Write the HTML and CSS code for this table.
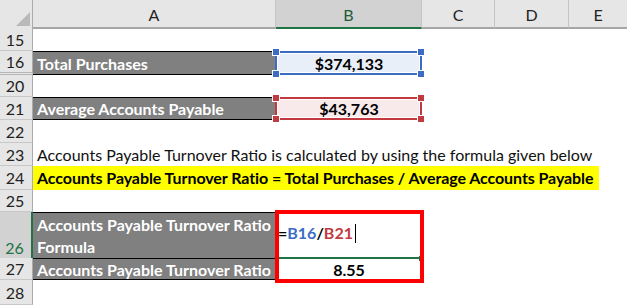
FILE: index.html
```html
<!DOCTYPE html>
<html>
<head>
<meta charset="utf-8">
<link rel="stylesheet" href="styles.css">
</head>
<body>
<div class="sheet">
  <div class="row hdr">
    <div class="corner"><svg width="33" height="28" viewBox="0 0 33 28"><polygon points="30,12 30,26 16,26" fill="#b9b9b9"/></svg></div>
    <div class="ch">A</div>
    <div class="ch sel">B</div>
    <div class="ch">C</div>
    <div class="ch">D</div>
    <div class="ch last">E</div>
  </div>

  <div class="row h23"><div class="rh">15</div></div>

  <div class="row h24">
    <div class="rh dbl">16</div>
    <div class="lab">Total Purchases</div>
    <div class="ref blue"><span class="val">$374,133</span><div class="box"><i class="hd tl"></i><i class="hd tr"></i><i class="hd bl"></i><i class="hd br"></i></div></div>
  </div>

  <div class="row h22"><div class="rh">20</div></div>

  <div class="row h23">
    <div class="rh">21</div>
    <div class="lab">Average Accounts Payable</div>
    <div class="ref red"><span class="val">$43,763</span><div class="box"><i class="hd tl"></i><i class="hd tr"></i><i class="hd bl"></i><i class="hd br"></i></div></div>
  </div>

  <div class="row h23"><div class="rh">22</div></div>

  <div class="row h23">
    <div class="rh">23</div>
    <div class="span"><span class="plain">Accounts Payable Turnover Ratio is calculated by using the formula given below</span></div>
  </div>

  <div class="row h24">
    <div class="rh">24</div>
    <div class="span"><span class="hl">Accounts Payable Turnover Ratio = Total Purchases / Average Accounts Payable</span></div>
  </div>

  <div class="row h22"><div class="rh">25</div></div>

  <div class="grp">
    <div class="row h46">
      <div class="rh active">26</div>
      <div class="lab two">Accounts Payable Turnover Ratio<br>Formula</div>
      <div class="edit"><span class="k">=</span><span class="b">B16</span><span class="k">/</span><span class="r">B21</span><span class="caret"></span><i class="fill"></i></div>
    </div>
    <div class="row h22">
      <div class="rh">27</div>
      <div class="lab">Accounts Payable Turnover Ratio</div>
      <div class="num">8.55</div>
    </div>
    <div class="redbox"></div>
  </div>

  <div class="row h25"><div class="rh">28</div></div>
</div>
</body>
</html>
```

FILE: styles.css
```css
html, body {
  margin: 0;
  padding: 0;
  background: #ffffff;
}
body {
  width: 627px;
  height: 305px;
  overflow: hidden;
}
.sheet {
  font-family: Lato, "Open Sans", "Liberation Sans", sans-serif;
  font-size: 16px;
  color: #000;
}
.row {
  display: grid;
  grid-template-columns: 33px 243px 146px 73px 74px 58px;
}
.row > div {
  box-sizing: border-box;
  min-width: 0;
}
.h22 { height: 22px; }
.h23 { height: 23px; }
.h24 { height: 24px; }
.h25 { height: 25px; }
.h46 { height: 46px; }

/* column header */
.hdr {
  height: 28px;
  background: #e6e6e6;
}
.corner {
  border-right: 1px solid #ababab;
  border-bottom: 1px solid #ababab;
}
.corner svg { display: block; }
.ch {
  display: flex;
  align-items: center;
  justify-content: center;
  color: #222;
  border-right: 1px solid #c4c4c4;
  border-bottom: 2px solid #a6a6a6;
  padding-top: 2px;
}
.ch.sel {
  background: #d2d2d2;
  color: #1f5c3a;
  border-bottom: 2px solid #217346;
}
.ch.last { border-right: none; }

/* row header */
.rh {
  background: #e6e6e6;
  color: #222;
  border-right: 1px solid #ababab;
  border-bottom: 1px solid #c8c8c8;
  display: flex;
  align-items: center;
  justify-content: center;
  padding-right: 2px;
}
.rh.dbl { border-bottom: 3px double #b6b6b6; }
.rh.active {
  background: #d2d2d2;
  color: #217346;
  border-right: 2px solid #217346;
  align-items: flex-end;
  padding-bottom: 1px;
}

/* label cells */
.lab {
  background: #808080;
  color: #fff;
  font-weight: 700;
  border-top: 1px solid #000;
  border-bottom: 1px solid #000;
  padding-left: 4px;
  display: flex;
  align-items: center;
  white-space: nowrap;
}
.lab.two {
  display: block;
  line-height: 22px;
  padding-top: 1px;
}

/* reference-highlighted cells */
.ref {
  position: relative;
  display: flex;
  align-items: center;
  justify-content: center;
  font-weight: 700;
}
.ref.blue { background: #e9eff9; --c: #3b6dc5; }
.ref.red { background: #f8e9ea; --c: #c23a40; }
.box {
  position: absolute;
  left: -1px;
  top: 0;
  right: 0;
  bottom: 0;
  border: 2px solid var(--c);
  box-shadow: inset 0 0 0 1px #fff;
}
.hd {
  position: absolute;
  width: 6px;
  height: 6px;
  background: var(--c);
  outline: 1px solid #fff;
}
.hd.tl { left: -4px; top: -4px; }
.hd.tr { right: -4px; top: -4px; }
.hd.bl { left: -4px; bottom: -4px; }
.hd.br { right: -4px; bottom: -4px; }
.val { position: relative; }

/* spanning text */
.span {
  grid-column: 2 / -1;
  display: flex;
  align-items: center;
  white-space: nowrap;
}
.plain {
  padding-left: 4px;
  color: #111;
}
.hl {
  background: #ffff00;
  font-weight: 700;
  letter-spacing: -0.08px;
  padding: 0 6px 0 4px;
  height: 24px;
  line-height: 24px;
}

/* formula group */
.grp {
  position: relative;
}
.edit {
  position: relative;
  font-weight: 700;
  padding-left: 2px;
  padding-top: 12px;
  line-height: 18px;
  border-bottom: 2px solid #217346;
  display: flex;
  align-items: flex-start;
}
.edit .k { color: #000; }
.edit .b { color: #3b6dc5; }
.edit .r { color: #c23a40; }
.caret {
  display: inline-block;
  width: 1px;
  height: 19px;
  margin-left: 2px;
  background: #000;
}
.fill {
  position: absolute;
  right: -2px;
  bottom: -4px;
  width: 5px;
  height: 5px;
  background: #217346;
}
.num {
  display: flex;
  align-items: center;
  justify-content: center;
  font-weight: 700;
}
.redbox {
  position: absolute;
  left: 275px;
  top: -2px;
  width: 149px;
  height: 73px;
  box-sizing: border-box;
  border: 4px solid #ff0000;
}
```
